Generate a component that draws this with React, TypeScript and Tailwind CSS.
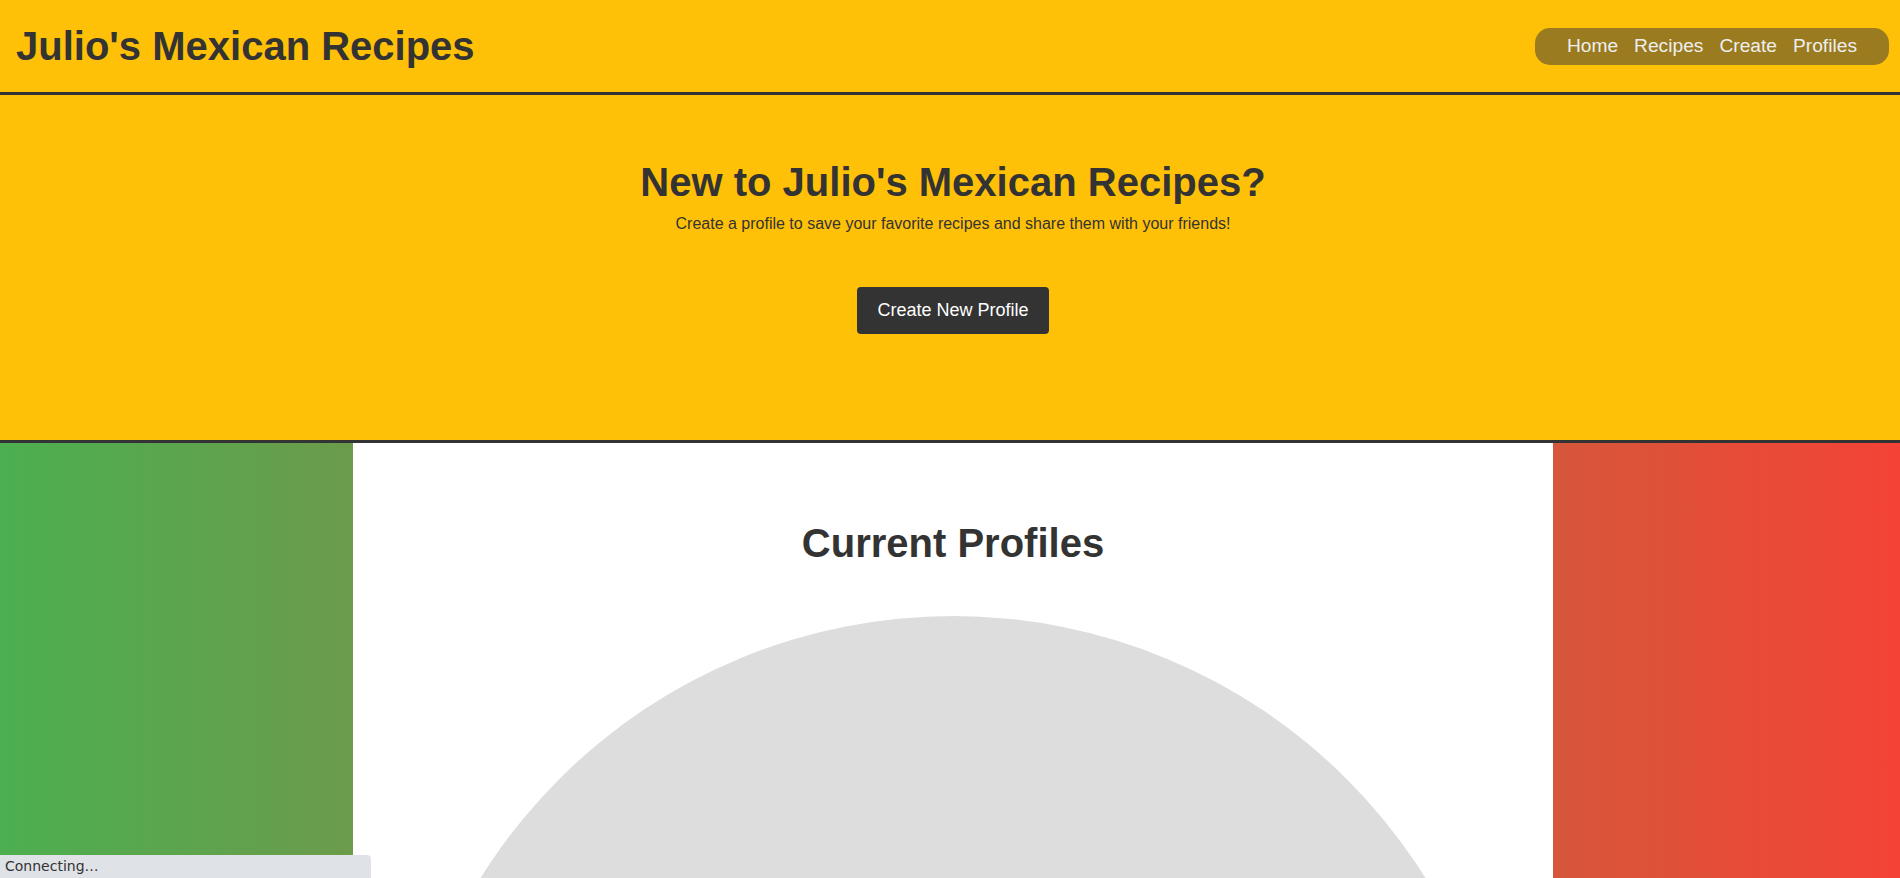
import React from 'react';

const navLinks = ['Home', 'Recipes', 'Create', 'Profiles'];

export default function App() {
  return (
    <div className="min-h-screen bg-[linear-gradient(to_right,#4caf50,#f44336)] font-['Liberation_Sans',Arial,sans-serif] text-[#333]">
      {/* Header */}
      <header className="h-[95px] bg-[#ffc107] border-b-[3px] border-[#333] flex items-center justify-between pl-4 pr-[11px]">
        <h1 className="text-[40px] font-bold leading-[46px] text-[#333]">Julio's Mexican Recipes</h1>
        <nav className="h-[37px] rounded-[15px] bg-[#9a7b20] flex items-center px-6">
          {navLinks.map((link) => (
            <a key={link} href="#" className="px-2 text-[19.2px] text-[#eee]">
              {link}
            </a>
          ))}
        </nav>
      </header>

      {/* Hero */}
      <section className="h-[348px] bg-[#ffc107] border-b-[3px] border-[#333] flex flex-col items-center pt-[64px] pl-[6px]">
        <h2 className="text-[40px] font-bold leading-[46px]">New to Julio's Mexican Recipes?</h2>
        <p className="mt-[10px] text-[16px] leading-[18px]">
          Create a profile to save your favorite recipes and share them with your friends!
        </p>
        <button className="mt-[54px] h-[47px] px-5 rounded bg-[#333] text-white text-[18px]">
          Create New Profile
        </button>
      </section>

      {/* Profiles */}
      <main className="w-[1200px] ml-[353px] bg-white h-[435px] overflow-hidden flex flex-col items-center pt-[77px]">
        <h2 className="text-[40px] font-bold leading-[46px]">Current Profiles</h2>
        <div className="mt-[50px] w-[1114px] h-[1114px] shrink-0 rounded-full bg-[#ddd]" />
      </main>

      {/* Status bubble */}
      <div className="fixed left-0 bottom-0 w-[371px] h-[23px] bg-[#dfe2e6] rounded-tr-[4px] pl-[5px] flex items-center text-[14px] text-[#333] font-['DejaVu_Sans',sans-serif]">
        Connecting…
      </div>
    </div>
  );
}
